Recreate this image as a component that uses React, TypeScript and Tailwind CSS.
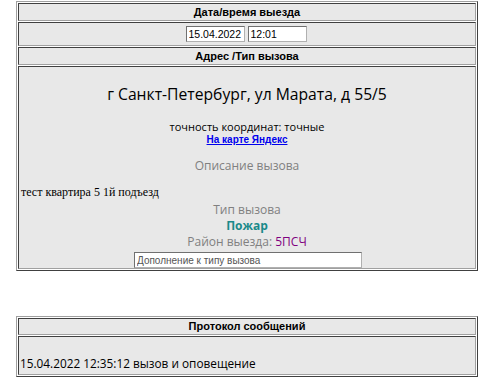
import React from 'react';

const sans = "font-['Open_Sans',sans-serif]";
const tahoma = "font-['Liberation_Sans',Arial,sans-serif]";

const outer =
  'w-[462px] ml-[16px] border border-t-[#a0a0a0] border-l-[#a0a0a0] border-r-[#404040] border-b-[#404040] p-[1px] flex flex-col gap-[1px] bg-white';
const cell =
  'border border-t-[#404040] border-l-[#404040] border-r-[#a0a0a0] border-b-[#a0a0a0] bg-[#e8e8e8]';
const input =
  'h-[16px] border border-t-[#707070] border-l-[#707070] border-r-[#b0b0b0] border-b-[#b0b0b0] bg-white px-[2px] text-black outline-none';

const HeaderCell: React.FC<{ title: string; h: string }> = ({ title, h }) => (
  <div className={`${cell} ${h} flex items-center justify-center`}>
    <span className={`${tahoma} text-[11px] font-bold text-black leading-none`}>{title}</span>
  </div>
);

export default function App() {
  return (
    <div className="bg-white min-h-[392px] w-[502px] pt-[1px]">
      {/* Выезд */}
      <div className={outer}>
        <HeaderCell title="Дата/время выезда" h="h-[18px]" />
        <div className={`${cell} h-[24px] flex items-center justify-center gap-[3px] pr-[2px]`}>
          <input className={`${input} ${tahoma} text-[10.5px] w-[59px]`} defaultValue="15.04.2022" />
          <input className={`${input} ${tahoma} text-[10.5px] w-[59px]`} defaultValue="12:01" />
        </div>
        <HeaderCell title="Адрес /Тип вызова" h="h-[18px]" />
        <div className={`${cell} h-[203px] flex flex-col`}>
          <div className={`${sans} mt-[15px] text-[15.7px] leading-[24px] text-black text-center`}>
            г Санкт-Петербург, ул Марата, д 55/5
          </div>
          <div className={`${sans} mt-[14px] text-[11px] leading-[13px] text-black text-center`}>
            точность координат: точные
          </div>
          <div className="text-center text-[10px] leading-[13px]">
            <a href="#" className={`${tahoma} text-[10px] leading-[13px] font-bold text-[#0000ee] underline`}>
              На карте Яндекс
            </a>
          </div>
          <div className={`${sans} mt-[12px] text-[12px] leading-[16px] text-[#808080] text-center`}>
            Описание вызова
          </div>
          <div className="mt-[10px] pl-[2px] font-['Liberation_Serif',serif] text-[12px] leading-[16px] text-black">
            тест квартира 5 1й подъезд
          </div>
          <div className={`${sans} mt-[2px] text-[12px] leading-[16px] text-[#808080] text-center`}>
            Тип вызова
          </div>
          <div className={`${sans} text-[12px] leading-[16px] font-bold text-[#1a8a8a] text-center`}>
            Пожар
          </div>
          <div className={`${sans} text-[12px] leading-[16px] text-[#808080] text-center`}>
            Район выезда: <span className="text-[#800080]">5ПСЧ</span>
          </div>
          <div className="mt-[2px] flex justify-center pl-[2px]">
            <input
              className={`${input} ${tahoma} text-[10px] w-[228px] placeholder:text-[#555]`}
              placeholder="Дополнение к типу вызова"
            />
          </div>
        </div>
      </div>

      {/* Протокол */}
      <div className={`${outer} mt-[45px]`}>
        <HeaderCell title="Протокол сообщений" h="h-[17px]" />
        <div className={`${cell} h-[39px] flex flex-col justify-end pb-[3px] pl-[1px]`}>
          <div className={`${sans} text-[11.8px] leading-[16px] text-black`}>
            15.04.2022 12:35:12 вызов и оповещение
          </div>
        </div>
      </div>
    </div>
  );
}
